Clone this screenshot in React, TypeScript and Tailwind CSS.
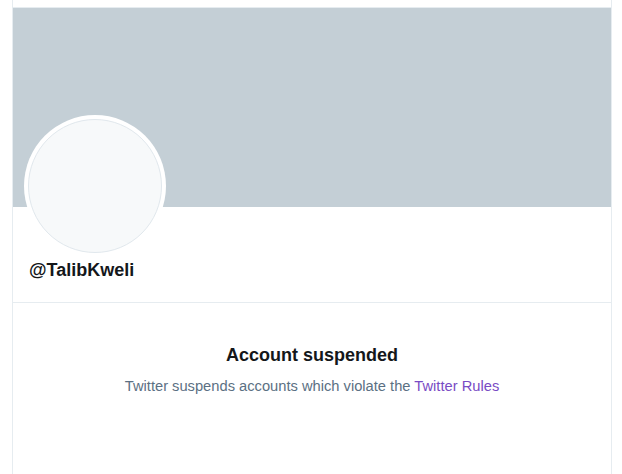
import React from "react";

export default function App() {
  return (
    <div
      className="h-[474px] w-[622px] overflow-hidden bg-white pl-[12px]"
      style={{ fontFamily: '"Liberation Sans", Arial, sans-serif' }}
    >
      <div className="flex h-full w-[600px] flex-col border-x border-[#e6ecf0]">
        <div className="h-[8px] shrink-0 border-b border-[#e6ecf0]" />
        <div className="h-[199px] shrink-0 bg-[#c4cfd6]" />
        <div className="flex shrink-0 flex-col border-b border-[#e6ecf0] pb-[20px]">
          <div className="ml-[11px] -mt-[92px] h-[142px] w-[142px] rounded-full bg-white p-[4px]">
            <div className="h-full w-full rounded-full border border-[#e1e8ed] bg-[#f7f9fa]" />
          </div>
          <div className="pl-[16px] pt-[1px] text-[18px] font-bold leading-[24px] text-[#14171a]">
            @TalibKweli
          </div>
        </div>
        <div className="flex flex-col items-center pt-[40px]">
          <div className="text-[18px] font-bold leading-[24px] text-[#14171a]">
            Account suspended
          </div>
          <div className="mt-[9px] text-[14.7px] leading-[20px] text-[#5b7083]">
            Twitter suspends accounts which violate the{" "}
            <a className="text-[#794bc4]">Twitter Rules</a>
          </div>
        </div>
      </div>
    </div>
  );
}
